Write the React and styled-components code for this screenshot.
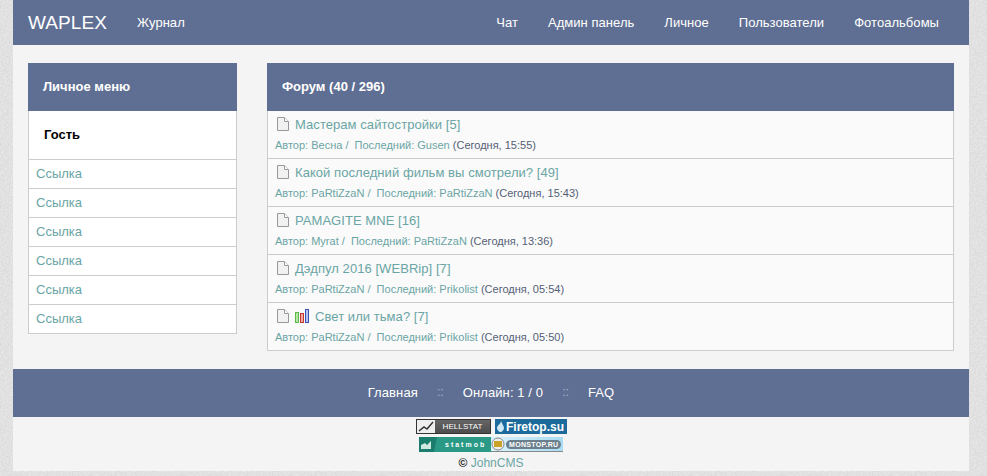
import React from 'react';
import styled, { createGlobalStyle } from 'styled-components';

const noise = "data:image/svg+xml,%3Csvg xmlns='http://www.w3.org/2000/svg' width='200' height='200'%3E%3Cfilter id='n'%3E%3CfeTurbulence type='fractalNoise' baseFrequency='.55' numOctaves='3'/%3E%3CfeColorMatrix values='0 0 0 0 .5 0 0 0 0 .5 0 0 0 0 .5 .6 0 0 0 -.18'/%3E%3C/filter%3E%3Crect width='200' height='200' filter='url(%23n)'/%3E%3C/svg%3E"

const GlobalStyle = createGlobalStyle`
  html, body {
    margin: 0;
    padding: 0;
    height: 100%;
    overflow: hidden;
    font-family: "Liberation Sans", Arial, sans-serif;
    background-color: #e6e6e6;
    background-image: url("${noise}");
  }
`

const Wrapper = styled.div`
  width: 956px;
  height: 471px;
  margin: 0 18px 0 13px;
  background: #f4f4f4;
  display: flex;
  flex-direction: column;
`

const TopBar = styled.div`
  height: 45px;
  background: #5f6f93;
  display: flex;
  align-items: center;
  padding-right: 15px;
`

const Brand = styled.a`
  color: #fff;
  font-size: 19px;
  letter-spacing: .1px;
  padding: 0 15px;
`

const NavLink = styled.a`
  color: #fff;
  font-size: 13px;
  letter-spacing: .04px;
  padding: 0 15px;
`

const NavRight = styled.div`
  margin-left: auto;
  display: flex;
`

const Content = styled.div`
  display: flex;
  gap: 30px;
  height: 324px;
  padding: 18px 15px 0;
  box-sizing: border-box;
`

const Side = styled.div`
  width: 209px;
  flex: none;
`

const Main = styled.div`
  flex: 1;
`

const PanelHead = styled.div`
  height: 48px;
  box-sizing: border-box;
  padding: 0 0 2px 15px;
  background: #5f6f93;
  color: #fff;
  font-size: 13px;
  font-weight: bold;
  display: flex;
  align-items: center;
`

const List = styled.div`
  border: 1px solid #ccc;
  border-top: none;
`

const Guest = styled.div`
  height: 46px;
  padding: 0 0 2px 15px;
  background: #fff;
  color: #000;
  font-size: 13px;
  font-weight: bold;
  display: flex;
  align-items: center;
  border-bottom: 1px solid #ccc;
`

const SideLink = styled.a`
  display: flex;
  align-items: center;
  height: 26px;
  padding: 0 0 2px 7px;
  background: #fff;
  color: #6aa5a5;
  font-size: 13px;
  border-bottom: 1px solid #ccc;
  &:last-child {
    border-bottom: none;
  }
`

const Topic = styled.div`
  height: 47px;
  background: #fafafa;
  border-bottom: 1px solid #ccc;
  padding-left: 7px;
  &:last-child {
    border-bottom: none;
  }
`

const TopicTitle = styled.div`
  display: flex;
  align-items: center;
  gap: 6px;
  height: 26px;
  padding-left: 2px;
  color: #6aa5a5;
  font-size: 13px;
  letter-spacing: .06px;
`

const Meta = styled.div`
  height: 16px;
  display: flex;
  align-items: center;
  white-space: pre;
  color: #6aa5a5;
  font-size: 11px;
`

const MetaDate = styled.span`
  color: #555f75;
`

const BottomBar = styled.div`
  height: 48px;
  box-sizing: border-box;
  padding-bottom: 2px;
  background: #5f6f93;
  display: flex;
  align-items: center;
  justify-content: center;
  color: #fff;
  font-size: 13px;
  letter-spacing: .1px;
  gap: 19px;
`

const Sep = styled.span`
  color: #aeb6c8;
  font-size: 12px;
`

const Counters = styled.div`
  display: flex;
  flex-direction: column;
  align-items: center;
  padding-top: 2px;
`

const CounterRow = styled.div`
  display: flex;
  gap: ${(p) => p.$gap}px;
  margin-bottom: 3px;
`

const Banner = styled.div`
  width: ${(p) => p.$w}px;
  height: 15px;
  box-sizing: border-box;
  display: flex;
  align-items: center;
  overflow: hidden;
  white-space: nowrap;
  color: #fff;
`

const HellStat = styled(Banner)`
  background: linear-gradient(#666, #4d4d4d);
  border: 1px solid #333;
  font-size: 8px;
  letter-spacing: .1px;
`

const HellIcon = styled.div`
  width: 18px;
  height: 13px;
  background: #eee;
  margin-right: 8px;
  display: flex;
`

const FireTop = styled(Banner)`
  background: #1c6a9c;
  font-weight: bold;
  font-size: 12px;
  justify-content: center;
  gap: 2px;
`

const StatMob = styled(Banner)`
  background: #2a9a87;
  font-weight: bold;
  font-size: 7px;
  letter-spacing: 2px;
  gap: 8px;
`

const MonStop = styled(Banner)`
  background: linear-gradient(90deg, #d8f1fb, #a9dcf2);
  border-bottom: 1px solid #888;
  font-weight: bold;
  font-size: 7px;
  gap: 1px;
`

const MonLabel = styled.span`
  background: #6c7f8c;
  border-radius: 6px;
  padding: 1px 3px;
  letter-spacing: .3px;
`

const Copy = styled.div`
  font-size: 12px;
  color: #6aa5a5;
  margin-top: 1px;
`

const CopySign = styled.span`
  color: #222;
  font-weight: bold;
`

const FileIcon = () => (
  <svg width="12" height="14" viewBox="0 0 12 14">
    <path d="M.5.500h7l4 4v9H.5z" fill="#f1f1f1" stroke="#999" />
    <path d="M7.500.500v4h4" fill="#fff" stroke="#999" />
  </svg>
)

const ChartIcon = () => (
  <svg width="14" height="14" viewBox="0 0 14 14">
    <rect x=".5" y="3.5" width="3" height="10" fill="#b5e8a4" stroke="#5cb84a" />
    <rect x="5.500" y="4.500" width="3" height="9" fill="#f7a6a6" stroke="#c0392b" />
    <rect x="10.500" y=".5" width="3" height="13" fill="#b2c2f2" stroke="#3b55b0" />
  </svg>
)

const Topics = [
  { title: 'Мастерам сайтостройки [5]', author: 'Весна', last: 'Gusen', date: '15:55' },
  { title: 'Какой последний фильм вы смотрели? [49]', author: 'PaRtiZzaN', last: 'PaRtiZzaN', date: '15:43' },
  { title: 'PAMAGITE MNE [16]', author: 'Myrat', last: 'PaRtiZzaN', date: '13:36' },
  { title: 'Дэдпул 2016 [WEBRip] [7]', author: 'PaRtiZzaN', last: 'Prikolist', date: '05:54' },
  { title: 'Свет или тьма? [7]', author: 'PaRtiZzaN', last: 'Prikolist', date: '05:50', chart: true },
]

const App = () => (
  <>
    <GlobalStyle />
    <Wrapper>
      <TopBar>
        <Brand>WAPLEX</Brand>
        <NavLink>Журнал</NavLink>
        <NavRight>
          <NavLink>Чат</NavLink>
          <NavLink>Админ панель</NavLink>
          <NavLink>Личное</NavLink>
          <NavLink>Пользователи</NavLink>
          <NavLink>Фотоальбомы</NavLink>
        </NavRight>
      </TopBar>
      <Content>
        <Side>
          <PanelHead>Личное меню</PanelHead>
          <List>
            <Guest>Гость</Guest>
            {[1, 2, 3, 4, 5, 6].map((i) => (
              <SideLink key={i}>Ссылка</SideLink>
            ))}
          </List>
        </Side>
        <Main>
          <PanelHead>Форум (40 / 296)</PanelHead>
          <List>
            {Topics.map((t) => (
              <Topic key={t.date}>
                <TopicTitle>
                  <FileIcon />
                  {t.chart && <ChartIcon />}
                  {t.title}
                </TopicTitle>
                <Meta>
                  Автор: {t.author} /  Последний: {t.last} <MetaDate>(Сегодня, {t.date})</MetaDate>
                </Meta>
              </Topic>
            ))}
          </List>
        </Main>
      </Content>
      <BottomBar>
        <span>Главная</span>
        <Sep>::</Sep>
        <span>Онлайн: 1 / 0</span>
        <Sep>::</Sep>
        <span>FAQ</span>
      </BottomBar>
      <Counters>
        <CounterRow $gap={4}>
          <HellStat $w={75}>
            <HellIcon>
              <svg width="18" height="13" viewBox="0 0 18 13">
                <path d="M2 11l5-4 3 2 6-7" fill="none" stroke="#333" strokeWidth="1.5" />
              </svg>
            </HellIcon>
            HELLSTAT
          </HellStat>
          <FireTop $w={72}>
            <svg width="7" height="11" viewBox="0 0 7 11">
              <path d="M4 0c0 3-4 4-4 7 0 2 2 4 3.500 4S7 9 7 7C7 5 5 3 4 0z" fill="#cfe6f5" />
            </svg>
            Firetop.su
          </FireTop>
        </CounterRow>
        <CounterRow $gap={0}>
          <StatMob $w={72}>
            <svg width="18" height="15" viewBox="0 0 18 15">
              <path d="M0 0h18l-3 15H0z" fill="#1a7d6d" />
              <path d="M2 12V8l4-2 2 2 4-4v8z" fill="#cfe8e0" />
            </svg>
            statmob
          </StatMob>
          <MonStop $w={72}>
            <svg width="14" height="14" viewBox="0 0 14 14">
              <circle cx="7" cy="7" r="6" fill="#eee" stroke="#888" />
              <rect x="3" y="4" width="8" height="6" fill="#c9a227" />
            </svg>
            <MonLabel>MONSTOP.RU</MonLabel>
          </MonStop>
        </CounterRow>
        <Copy>
          <CopySign>©</CopySign> JohnCMS
        </Copy>
      </Counters>
    </Wrapper>
  </>
)

export default App
